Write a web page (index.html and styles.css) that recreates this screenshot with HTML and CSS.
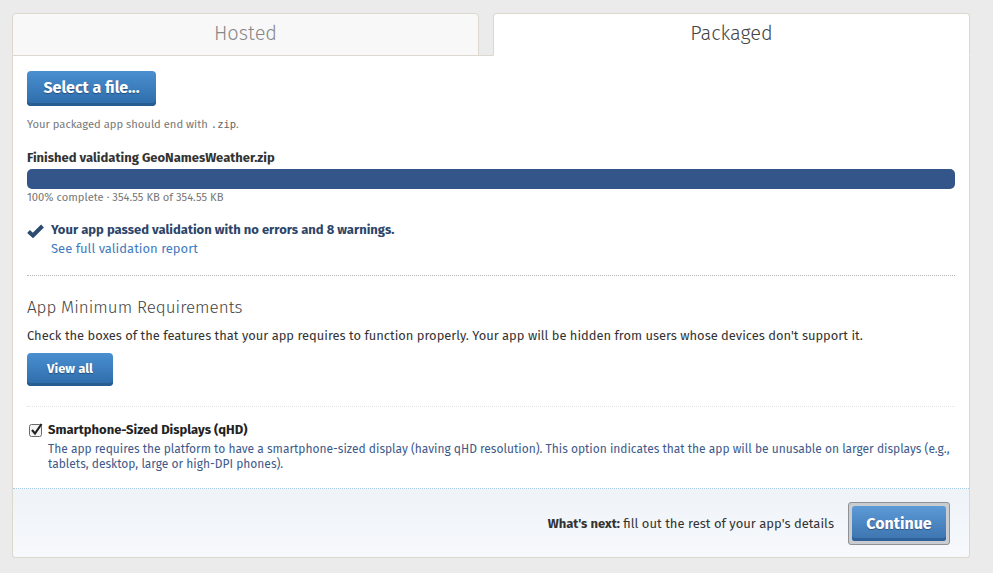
FILE: index.html
```html
<!DOCTYPE html>
<html lang="en">
<head>
<meta charset="utf-8">
<title>Submit App</title>
<link rel="stylesheet" href="styles.css">
</head>
<body>
<div class="wrap">
  <div class="tabs">
    <div class="tab tab-off">Hosted</div>
    <div class="tab tab-on">Packaged</div>
  </div>
  <div class="panel">
    <div class="body">
      <button class="btn btn-lg">Select a file...</button>
      <p class="hint">Your packaged app should end with <code>.zip</code>.</p>
      <p class="status">Finished validating GeoNamesWeather.zip</p>
      <div class="bar"></div>
      <p class="hint tight">100% complete · 354.55 KB of 354.55 KB</p>
      <div class="passed">
        <svg class="check" width="17" height="14" viewBox="0 0 17 14"><path d="M1.5 7.5 L6 11.5 L15.5 2" fill="none" stroke="#2d4a70" stroke-width="4" stroke-linejoin="miter"/></svg>
        <div>
          <div class="passed-title">Your app passed validation with no errors and 8 warnings.</div>
          <a class="link" href="#">See full validation report</a>
        </div>
      </div>
      <div class="sep"></div>
      <h2 class="heading">App Minimum Requirements</h2>
      <p class="para">Check the boxes of the features that your app requires to function properly. Your app will be hidden from users whose devices don't support it.</p>
      <button class="btn btn-sm">View all</button>
      <div class="sep light"></div>
      <div class="feature">
        <svg class="cbox" width="14" height="14" viewBox="0 0 14 14"><rect x="0.5" y="1.5" width="12" height="12" rx="2" fill="#f4f4f4" stroke="#6a6a6a"/><path d="M3 7 L6 10.5 L12.5 1" fill="none" stroke="#222" stroke-width="2.2"/></svg>
        <div>
          <div class="feature-title">Smartphone-Sized Displays (qHD)</div>
          <div class="feature-desc">The app requires the platform to have a smartphone-sized display (having qHD resolution). This option indicates that the app will be unusable on larger displays (e.g., tablets, desktop, large or high-DPI phones).</div>
        </div>
      </div>
    </div>
    <div class="footer">
      <span class="next"><b>What's next:</b> fill out the rest of your app's details</span>
      <span class="focus-ring"><button class="btn btn-cont">Continue</button></span>
    </div>
  </div>
</div>
</body>
</html>
```
FILE: styles.css
```css
* { box-sizing: border-box; }
html, body { margin: 0; padding: 0; }
body {
  background: #ebebeb;
  font-family: "Fira Sans", Lato, "Noto Sans", sans-serif;
  color: #333;
  font-size: 13px;
}
.wrap {
  padding: 13px 23px 0 12px;
  width: 993px;
}
.tabs {
  display: flex;
  gap: 14px;
  margin-bottom: -1px;
  position: relative;
  z-index: 1;
}
.tab {
  height: 43px;
  border: 1px solid #dcd8cd;
  border-radius: 4px 4px 0 0;
  text-align: center;
  font-size: 20px;
  line-height: 38px;
  font-weight: 300;
}
.tab-off {
  width: 468px;
  background: #f8f8f8;
  color: #888;
}
.tab-on {
  width: 478px;
  background: #fff;
  color: #444;
  border-bottom-color: #fff;
}
.panel {
  background: #fff;
  border: 1px solid #dcd8cd;
  border-radius: 0 0 4px 4px;
  box-shadow: 0 1px 0 rgba(0,0,0,0.04);
}
.body {
  padding: 15px 14px 16px 14px;
}
.btn {
  border: 0;
  border-radius: 4px;
  background: linear-gradient(#4a8fd0, #2d6ba9);
  box-shadow: inset 0 -3px 0 #285d92;
  color: #fff;
  font-family: inherit;
  font-weight: 700;
  text-shadow: 0 1px 1px rgba(0,0,0,0.35);
  cursor: pointer;
  display: block;
}
.btn-lg {
  width: 129px;
  height: 35px;
  font-size: 16px;
  padding: 0 0 2px;
}
.btn-sm {
  width: 86px;
  height: 33px;
  font-size: 13px;
  padding: 0 0 2px;
}
.hint {
  margin: 10px 0 0;
  font-size: 11.2px;
  line-height: 16px;
  color: #777;
}
.hint code {
  font-family: "DejaVu Sans Mono", monospace;
  font-size: 10.5px;
  color: #666;
}
.hint.tight { margin-top: 1px; }
.status {
  margin: 16px 0 2px;
  font-weight: 700;
  line-height: 18px;
  color: #333;
}
.bar {
  height: 20px;
  border-radius: 5px;
  background: #34558a;
}
.passed {
  margin-top: 15px;
  display: flex;
  gap: 7px;
  align-items: flex-start;
}
.check { margin-top: 3px; flex: none; }
.passed-title {
  font-weight: 700;
  color: #2c4568;
  line-height: 18px;
}
.link {
  display: block;
  color: #3f7bc0;
  text-decoration: none;
  line-height: 19px;
}
.sep {
  border-top: 1px dotted #b5b5b5;
  margin-top: 17px;
}
.sep.light {
  border-top-color: #e4e4e4;
  margin-top: 20px;
}
.heading {
  margin: 20px 0 0;
  font-size: 17px;
  font-weight: 300;
  line-height: 24px;
  color: #444;
}
.para {
  margin: 7px 0 8px;
  font-size: 12.92px;
  line-height: 18px;
}
.feature {
  margin-top: 14px;
  display: flex;
  gap: 5px;
  padding-left: 2px;
}
.cbox { flex: none; margin-top: 2px; }
.feature-title {
  font-weight: 700;
  line-height: 18px;
  color: #222;
}
.feature-desc {
  margin-top: 3px;
  font-size: 12px;
  letter-spacing: -0.01px;
  line-height: 15px;
  color: #3e5a8a;
}
.footer {
  border-top: 1px dotted #a9cbe6;
  background: linear-gradient(#eef3f8, #f7f9fc);
  height: 69px;
  display: flex;
  align-items: center;
  justify-content: flex-end;
  padding-right: 19px;
  gap: 14px;
  border-radius: 0 0 4px 4px;
}
.next {
  color: #333;
  font-size: 13px;
}
.next b { font-weight: 700; }
.focus-ring {
  display: block;
  padding: 3px;
  border: 1px solid #8e9296;
  background: #c9cdd2;
  border-radius: 3px;
}
.btn-cont {
  width: 94px;
  height: 35px;
  font-size: 16px;
  border-radius: 3px;
  background: linear-gradient(#5c9ad6, #3b73ae);
  box-shadow: inset 0 -3px 0 #2f6298;
}
```
